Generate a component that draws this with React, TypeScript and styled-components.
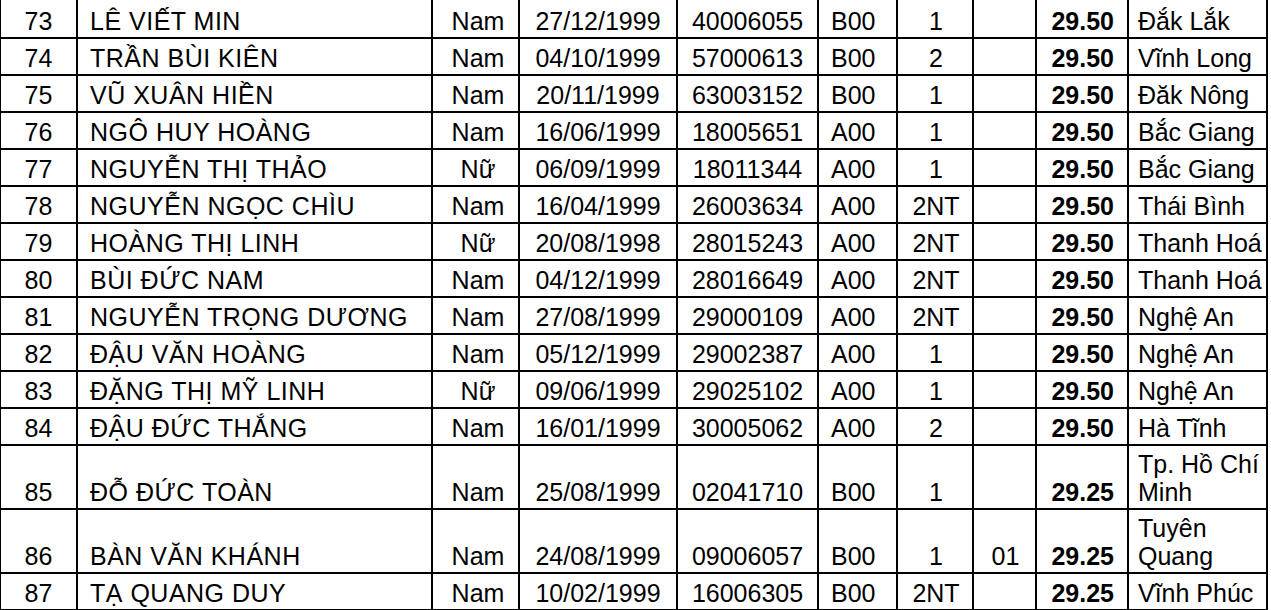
import styled, { createGlobalStyle } from "styled-components";

const GlobalStyle = createGlobalStyle`
    html, body {
        margin: 0;
        padding: 0;
        background: #ffffff;
        overflow: hidden;
    }
`;

const Page = styled.div`
    width: 1271px;
    height: 610px;
    overflow: hidden;
    font-family: "Liberation Sans", Arial, sans-serif;
    font-size: 25px;
    color: #000;
`;

const Table = styled.div`
    display: flex;
    flex-direction: column;
    gap: 2px;
    width: fit-content;
    margin-left: -1px;
    padding: 0 2px 2px 2px;
    background: #000;
`;

const Row = styled.div<{ $tall?: boolean; $first?: boolean }>`
    display: grid;
    grid-template-columns: 75px 353px 85px 156px 139px 77px 74px 61px 90px 137px;
    gap: 2px;
    height: ${props => (props.$tall ? "62px" : props.$first ? "37px" : "35px")};
`;

type Align = "left" | "center" | "right";

const Cell = styled.div<{ $align?: Align; $bold?: boolean; $pl?: number; $pr?: number; $spaced?: boolean }>`
    background: #fff;
    display: flex;
    flex-direction: column;
    justify-content: flex-end;
    text-align: ${props => props.$align || "center"};
    font-weight: ${props => (props.$bold ? 700 : 400)};
    letter-spacing: ${props => (props.$spaced ? "0.5px" : "normal")};
    line-height: 28px;
    padding: 0 ${props => props.$pr ?? 0}px 2px ${props => props.$pl ?? 0}px;
    white-space: normal;
    overflow: hidden;
`;

interface IStudent {
    stt: number;
    name: string;
    gender: string;
    dob: string;
    sbd: string;
    block: string;
    area: string;
    priority: string;
    score: string;
    province: string;
}

const students: IStudent[] = [
    { stt: 73, name: "LÊ VIẾT MIN", gender: "Nam", dob: "27/12/1999", sbd: "40006055", block: "B00", area: "1", priority: "", score: "29.50", province: "Đắk Lắk" },
    { stt: 74, name: "TRẦN BÙI KIÊN", gender: "Nam", dob: "04/10/1999", sbd: "57000613", block: "B00", area: "2", priority: "", score: "29.50", province: "Vĩnh Long" },
    { stt: 75, name: "VŨ XUÂN HIỀN", gender: "Nam", dob: "20/11/1999", sbd: "63003152", block: "B00", area: "1", priority: "", score: "29.50", province: "Đăk Nông" },
    { stt: 76, name: "NGÔ HUY HOÀNG", gender: "Nam", dob: "16/06/1999", sbd: "18005651", block: "A00", area: "1", priority: "", score: "29.50", province: "Bắc Giang" },
    { stt: 77, name: "NGUYỄN THỊ THẢO", gender: "Nữ", dob: "06/09/1999", sbd: "18011344", block: "A00", area: "1", priority: "", score: "29.50", province: "Bắc Giang" },
    { stt: 78, name: "NGUYỄN NGỌC CHÌU", gender: "Nam", dob: "16/04/1999", sbd: "26003634", block: "A00", area: "2NT", priority: "", score: "29.50", province: "Thái Bình" },
    { stt: 79, name: "HOÀNG THỊ LINH", gender: "Nữ", dob: "20/08/1998", sbd: "28015243", block: "A00", area: "2NT", priority: "", score: "29.50", province: "Thanh Hoá" },
    { stt: 80, name: "BÙI ĐỨC NAM", gender: "Nam", dob: "04/12/1999", sbd: "28016649", block: "A00", area: "2NT", priority: "", score: "29.50", province: "Thanh Hoá" },
    { stt: 81, name: "NGUYỄN TRỌNG DƯƠNG", gender: "Nam", dob: "27/08/1999", sbd: "29000109", block: "A00", area: "2NT", priority: "", score: "29.50", province: "Nghệ An" },
    { stt: 82, name: "ĐẬU VĂN HOÀNG", gender: "Nam", dob: "05/12/1999", sbd: "29002387", block: "A00", area: "1", priority: "", score: "29.50", province: "Nghệ An" },
    { stt: 83, name: "ĐẶNG THỊ MỸ LINH", gender: "Nữ", dob: "09/06/1999", sbd: "29025102", block: "A00", area: "1", priority: "", score: "29.50", province: "Nghệ An" },
    { stt: 84, name: "ĐẬU ĐỨC THẮNG", gender: "Nam", dob: "16/01/1999", sbd: "30005062", block: "A00", area: "2", priority: "", score: "29.50", province: "Hà Tĩnh" },
    { stt: 85, name: "ĐỖ ĐỨC TOÀN", gender: "Nam", dob: "25/08/1999", sbd: "02041710", block: "B00", area: "1", priority: "", score: "29.25", province: "Tp. Hồ Chí Minh" },
    { stt: 86, name: "BÀN VĂN KHÁNH", gender: "Nam", dob: "24/08/1999", sbd: "09006057", block: "B00", area: "1", priority: "01", score: "29.25", province: "Tuyên Quang" },
    { stt: 87, name: "TẠ QUANG DUY", gender: "Nam", dob: "10/02/1999", sbd: "16006305", block: "B00", area: "2NT", priority: "", score: "29.25", province: "Vĩnh Phúc" }
];

function App() {
    return (
        <Page>
            <GlobalStyle />
            <Table>
                {students.map((s, i) => (
                    <Row key={s.stt} $first={i === 0} $tall={s.stt === 85 || s.stt === 86}>
                        <Cell>{s.stt}</Cell>
                        <Cell $align="left" $pl={12} $spaced>{s.name}</Cell>
                        <Cell $pl={5}>{s.gender}</Cell>
                        <Cell>{s.dob}</Cell>
                        <Cell>{s.sbd}</Cell>
                        <Cell $align="left" $pl={12}>{s.block}</Cell>
                        <Cell $pl={2}>{s.area}</Cell>
                        <Cell $pl={2}>{s.priority}</Cell>
                        <Cell $align="right" $bold $pr={13}>{s.score}</Cell>
                        <Cell $align="left" $pl={9} $pr={1}>{s.province}</Cell>
                    </Row>
                ))}
            </Table>
        </Page>
    );
}

export default App;
